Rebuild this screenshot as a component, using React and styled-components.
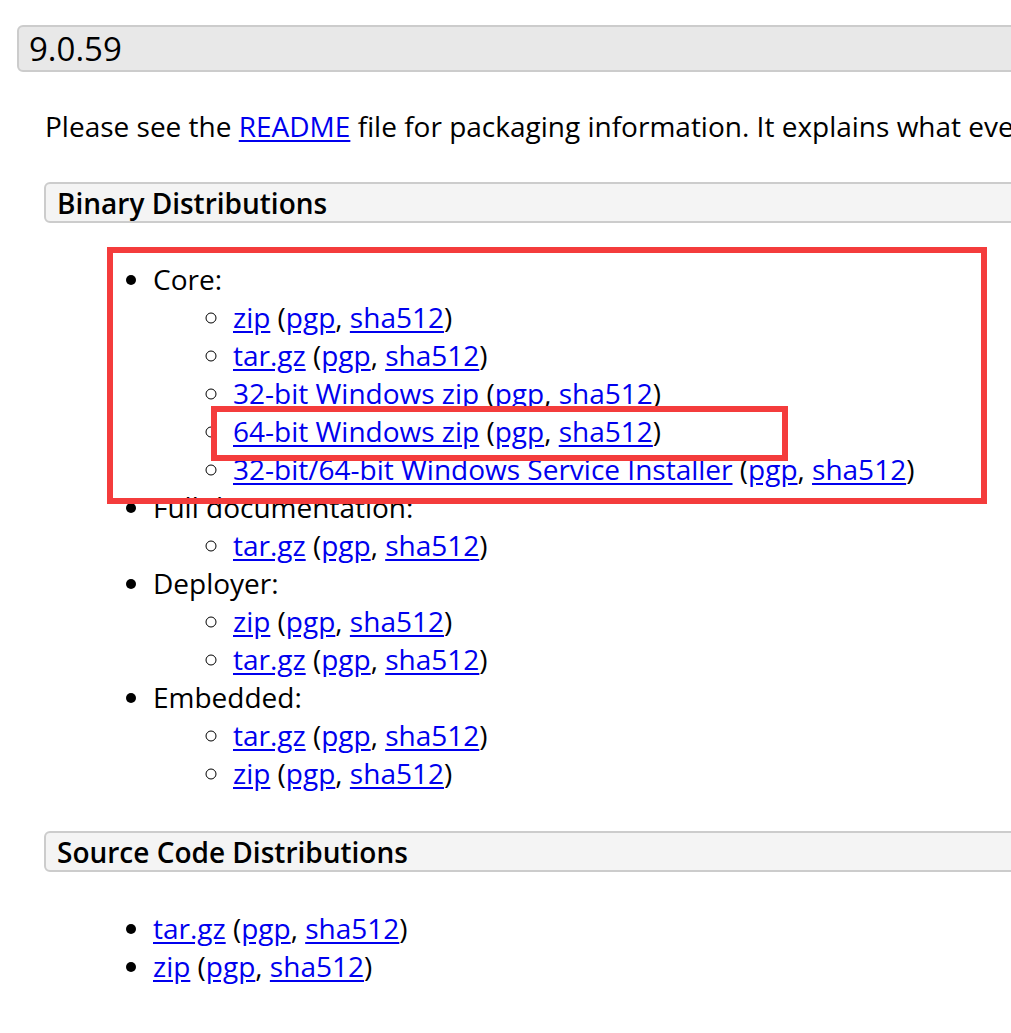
import styled, { createGlobalStyle } from 'styled-components'

const GlobalStyle = createGlobalStyle`
  html, body {
    margin: 0;
    padding: 0;
    background: #fff;
    overflow: hidden;
  }
  body {
    font-family: "Open Sans", "Liberation Sans", sans-serif;
    font-size: 28px;
    color: #000;
  }
`

const Page = styled.div`
  position: relative;
  width: 1400px;
  padding: 25px 0 0 17px;
`

const VersionHeading = styled.h2`
  margin: 0;
  height: 43px;
  line-height: 44px;
  padding: 0 10px;
  border: 2px solid #cccccc;
  border-radius: 6px;
  background: #e8e8e8;
  font-size: 33px;
  font-weight: 400;
`

const Body = styled.div`
  padding-left: 28px;
`

const Intro = styled.p`
  margin: 35px 0 37px;
  line-height: 38px;
  white-space: nowrap;
`

const SectionHeading = styled.h3`
  margin: 0 0 0 -1px;
  height: 37px;
  line-height: 38px;
  padding: 0 11px;
  border: 2px solid #cccccc;
  border-radius: 6px;
  background: #f4f4f4;
  font-size: 28px;
  font-weight: 600;
`

const List = styled.ul`
  margin: ${(p) => (p.$nested ? '0' : '37px 0 39px')};
  padding-left: ${(p) => (p.$nested ? '80px' : '108px')};
  list-style: ${(p) => (p.$nested ? 'circle' : 'disc')};
  line-height: 38px;
  white-space: nowrap;
`

const Link = styled.a`
  color: #0000ee;
  text-decoration: underline;
  text-underline-offset: 3px;
`

const Highlight = styled.div`
  position: absolute;
  border: 6px solid #f43c3c;
  box-sizing: border-box;
  pointer-events: none;
`

function Files({ name }) {
  return (
    <li>
      <Link href="#">{name}</Link> (<Link href="#">pgp</Link>,{' '}
      <Link href="#">sha512</Link>)
    </li>
  )
}

const groups = [
  {
    title: 'Core:',
    files: [
      'zip',
      'tar.gz',
      '32-bit Windows zip',
      '64-bit Windows zip',
      '32-bit/64-bit Windows Service Installer',
    ],
  },
  { title: 'Full documentation:', files: ['tar.gz'] },
  { title: 'Deployer:', files: ['zip', 'tar.gz'] },
  { title: 'Embedded:', files: ['tar.gz', 'zip'] },
]

export default function App() {
  return (
    <>
      <GlobalStyle />
      <Page>
        <VersionHeading>9.0.59</VersionHeading>
        <Body>
          <Intro>
            Please see the <Link href="#">README</Link> file for packaging
            information. It explains what eve
          </Intro>
          <SectionHeading>Binary Distributions</SectionHeading>
          <List>
            {groups.map((g) => (
              <li key={g.title}>
                {g.title}
                <List $nested>
                  {g.files.map((f, i) => (
                    <Files key={i} name={f} />
                  ))}
                </List>
              </li>
            ))}
          </List>
          <SectionHeading>Source Code Distributions</SectionHeading>
          <List>
            <Files name="tar.gz" />
            <Files name="zip" />
          </List>
        </Body>
        <Highlight style={{ left: 107, top: 247, width: 880, height: 257 }} />
        <Highlight style={{ left: 211, top: 406, width: 577, height: 55 }} />
      </Page>
    </>
  )
}
